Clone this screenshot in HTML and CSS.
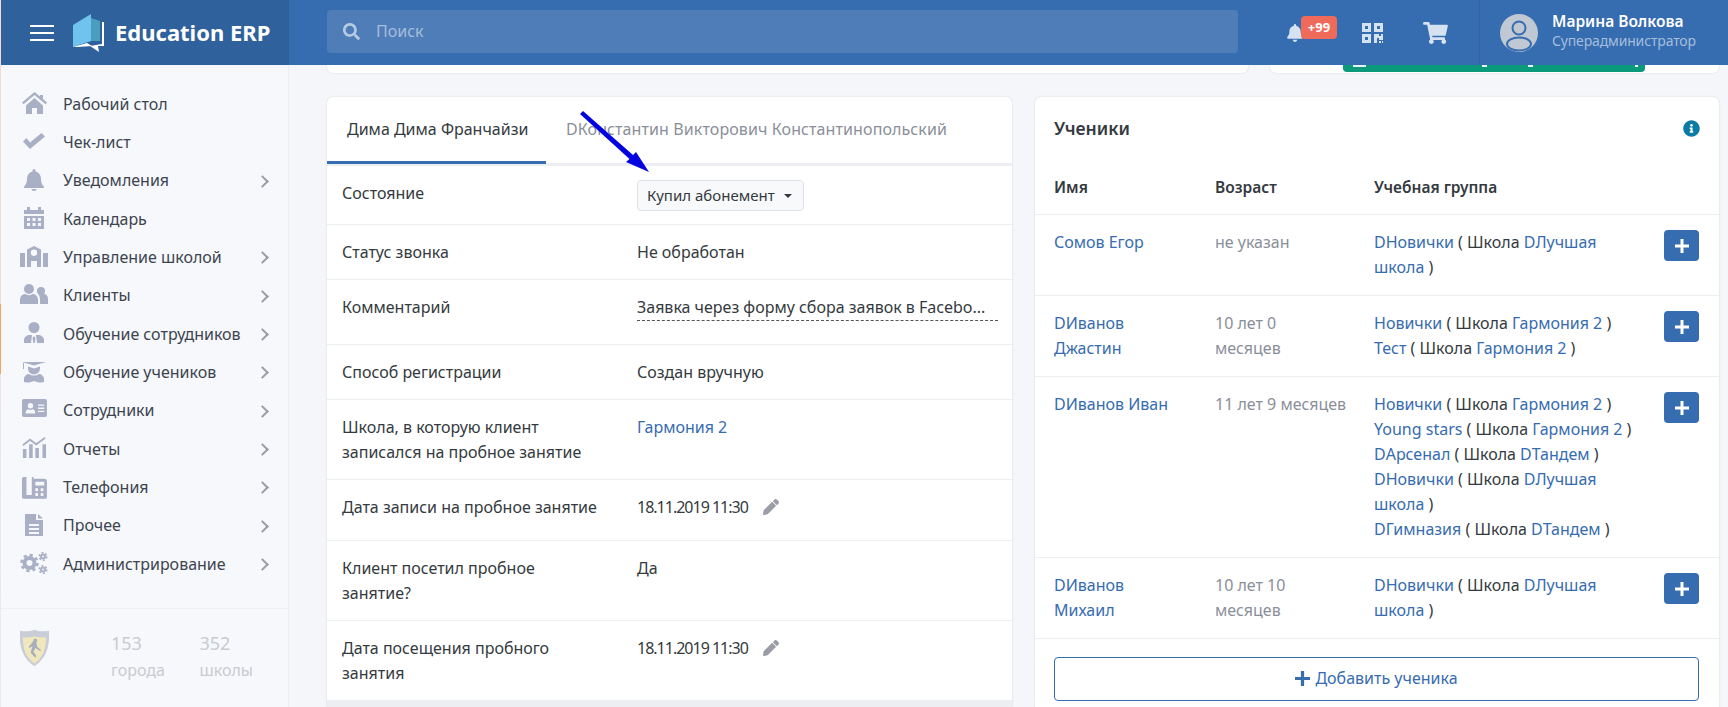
FILE: index.html

```html
<!DOCTYPE html>
<html lang="ru">
<head>
  <meta charset="UTF-8" />
  <meta name="viewport" content="width=device-width, initial-scale=1.0"/>
  <title>Education ERP</title>
  <link rel="stylesheet" href="styles.css">
</head>
<body>
  <header class="topbar">
    <div class="brand">
      <span class="burger"><i></i><i></i><i></i></span>
      <svg class="logo" viewBox="0 0 31 38"><path fill="#6fc3ee" d="M0 11 18 0v27L0 33z"/><path fill="#4a9dbd" d="M18 4l9 3v20H18z"/><path fill="#fff" d="M29 8h2v24h-6l1 6-9-6 12-2z"/><path fill="#fff" d="M0 33l14-4 5 3-14 1z"/></svg>
      <span class="brand-name">Education ERP</span>
    </div>
    <div class="search">
      <svg class="search-icon" viewBox="0 0 512 512"><path d="M505 442.7L405.3 343c-4.5-4.5-10.6-7-17-7H372c27.6-35.3 44-79.7 44-128C416 93.1 322.9 0 208 0S0 93.1 0 208s93.1 208 208 208c48.3 0 92.7-16.4 128-44v16.3c0 6.4 2.5 12.5 7 17l99.7 99.7c9.4 9.4 24.6 9.4 33.9 0l28.3-28.3c9.4-9.4 9.4-24.6.1-34zM208 336c-70.7 0-128-57.2-128-128 0-70.7 57.2-128 128-128 70.7 0 128 57.2 128 128 0 70.7-57.2 128-128 128z"/></svg>
      <span>Поиск</span>
    </div>
    <div class="tools">
      <span class="bell">
        <svg viewBox="0 0 448 512"><path d="M224 512c35.3 0 64-28.7 64-64H160c0 35.3 28.7 64 64 64zm215.4-149.7c-19.3-20.8-55.5-52-55.5-154.3 0-77.7-54.5-139.9-128-155.200V32c0-17.700-14.300-32-32-32s-32 14.300-32 32v20.800C118.400 68.100 64 130.300 64 208c0 102.300-36.200 133.500-55.500 154.300-6 6.400-8.600 14.100-8.500 21.700.1 16.400 13 32 32.100 32h383.800c19.100 0 32-15.600 32.100-32 .1-7.600-2.600-15.300-8.500-21.700z"/></svg>
        <b class="badge">+99</b>
      </span>
      <svg class="qr" viewBox="0 0 21 20"><path fill-rule="evenodd" d="M0 0h9v9H0zM3 3v3h3V3zM12 0h9v9h-9zM15 3v3h3V3zM0 11h9v9H0zM3 14v3h3v-3zM12 11h5v2h2v-2h2v6h-4v-2h-2v5h-3zM17 18h2v2h-2zM20 18h1v2h-1z"/></svg>
      <svg class="cart" viewBox="0 0 576 512"><path d="M528.100 301.300l47.300-208C578.800 78.300 567.400 64 552 64H159.200l-9.200-44.800C147.800 8 137.900 0 126.500 0H24C10.700 0 0 10.700 0 24v16c0 13.300 10.700 24 24 24h69.900l70.200 343.400C147.300 417.100 136 435.200 136 456c0 30.900 25.100 56 56 56s56-25.100 56-56c0-15.700-6.400-29.800-16.800-40h209.600C430.400 426.200 424 440.300 424 456c0 30.900 25.100 56 56 56s56-25.100 56-56c0-22.200-12.900-41.300-31.600-50.400l5.500-24.300c3.400-15-8-29.300-23.400-29.300H218.100l-6.500-32h293.100c11.200 0 20.900-7.800 23.400-18.700z"/></svg>
    </div>
    <div class="user">
      <svg class="avatar" viewBox="0 0 38 38"><circle cx="19" cy="19" r="19" fill="#c0c8d4"/><circle cx="19" cy="14" r="6.500" fill="none" stroke="#366cb0" stroke-width="2"/><ellipse cx="19" cy="30" rx="12" ry="6.500" fill="none" stroke="#366cb0" stroke-width="2"/></svg>
      <div class="user-info">
        <div class="user-name">Марина Волкова</div>
        <div class="user-role">Суперадминистратор</div>
      </div>
    </div>
  </header>

  <div class="layout">
    <aside class="sidebar">
      <nav class="menu">
        <a class="menu-item"><svg viewBox="0 0 28 24"><path d="M14.500 0 2 10.500l1.500 1.700L14.500 3l11 9.200L27 10.500l-4-3.500V3h-3v1.400zM6 13.500V22h6v-6h5v6h6v-8.500L14.500 6z"/></svg><span>Рабочий стол</span></a>
        <a class="menu-item"><svg viewBox="0 0 28 24"><path d="M6.500 7 3 10.500 10 18 25 5.500 21.500 2 10 11.500z"/></svg><span>Чек-лист</span></a>
        <a class="menu-item more"><svg viewBox="0 0 28 24"><path d="M14 0c-1 0-1.500.7-1.500 2v.5C9 3.500 7 6 7 10c0 5-2 6-3 8v1h20v-1c-1-2-3-3-3-8 0-4-2-6.500-5.500-7.500V2c0-1.300-.5-2-1.500-2zM11.500 20h5c0 1-1 2-2.500 2s-2.500-1-2.500-2z"/></svg><span>Уведомления</span></a>
        <a class="menu-item"><svg viewBox="0 0 28 24"><path fill-rule="evenodd" d="M7 0h3v3h8V0h3v3h3v19H4V3h3zM4 7v2h20V7zM7 11v3h3v-3zM12.500 11v3h3v-3zM18 11v3h3v-3zM7 16v3h3v-3zM12.500 16v3h3v-3zM18 16v3h3v-3z"/></svg><span>Календарь</span></a>
        <a class="menu-item more"><svg viewBox="0 0 28 24"><path fill-rule="evenodd" d="M14 0l7 3.500V21h-4v-6h-6v6H7V3.500zM14 3.500a3.200 3.200 0 1 0 0 6.400 3.200 3.200 0 0 0 0-6.400zM0 7h5v14H0zM23 7h5v14h-5z"/></svg><span>Управление школой</span></a>
        <a class="menu-item more"><svg viewBox="0 0 28 24"><circle cx="9" cy="5" r="5"/><circle cx="21" cy="7" r="4"/><path d="M0 20v-4c0-4 3-6 5-6 2.500 1.500 5.500 1.500 8 0 2 0 5 2 5 6v4zM20 20v-5c0-2-1-4-2-5 2 .8 4 .8 6-.2 2 .2 4 2.200 4 5.200v5z"/></svg><span>Клиенты</span></a>
        <a class="menu-item more"><svg viewBox="0 0 28 24"><circle cx="14" cy="5.500" r="5.500"/><path d="M4 21v-3c0-3 3-5 6-5h2l-1 8zM24 21v-3c0-3-3-5-6-5h-2l1 8zM14 14l1.500 2-.8 5h-1.400l-.8-5z"/></svg><span>Обучение сотрудников</span></a>
        <a class="menu-item more"><svg viewBox="0 0 28 24"><path d="M2 1h24L14 4.500zM8 5.500l6 2 6-2v2a6 6 0 0 1-12 0zM4 21v-3c0-3 3-5 5-5 3 2 7 2 10 0 2 0 5 2 5 5v3c-2 .8-5 .8-10-1-5 1.800-8 1.800-10 1z"/><path d="M3 2h1v6H3z"/></svg><span>Обучение учеников</span></a>
        <a class="menu-item more"><svg viewBox="0 0 28 24"><path transform="translate(2 -1.800) scale(.89 .9)" fill-rule="evenodd" d="M2 2h24a2 2 0 0 1 2 2v16a2 2 0 0 1-2 2H2a2 2 0 0 1-2-2V4a2 2 0 0 1 2-2zM9.500 6.500a3 3 0 1 0 0 6 3 3 0 0 0 0-6zM4 18h11c0-3-2-4.500-3-4.500-1.500.8-3.500.8-5 0-1 0-3 1.500-3 4.500zM18 8v1.500h7V8zM18 11.500V13h7v-1.500zM18 15v1.500h7V15z"/></svg><span>Сотрудники</span></a>
        <a class="menu-item more"><svg viewBox="0 0 28 24"><g transform="translate(2 -1) scale(.89 .92)"><path d="M1 14h4v10H1zM8 9h4v15H8zM15 13h4v11h-4zM23 9h4v15h-4z"/><path fill="none" stroke="currentColor" stroke-width="2" d="M1 10l8-6 7 5 10-7"/></g></svg><span>Отчеты</span></a>
        <a class="menu-item more"><svg viewBox="0 0 28 24"><path transform="translate(2 0) scale(.89 .95)" fill-rule="evenodd" d="M2 1h3v19h6V1h2v2h12a3 3 0 0 1 3 3v16a2 2 0 0 1-2 2H2a2 2 0 0 1-2-2V3a2 2 0 0 1 2-2zM15 6v4h10V6zM15 13v3h3v-3zM21 13v3h3v-3zM15 18v3h3v-3zM21 18v3h3v-3z"/></svg><span>Телефония</span></a>
        <a class="menu-item more"><svg viewBox="0 0 28 24"><path fill-rule="evenodd" d="M5 0h11v6h7v16H5zM18 0l5 4.500h-5zM9 10v2h10v-2zM9 14v2h10v-2zM9 18v2h10v-2z"/></svg><span>Прочее</span></a>
        <a class="menu-item more"><svg viewBox="0 0 28 24"><circle cx="9.500" cy="11" r="5" fill="none" stroke="currentColor" stroke-width="4"/><circle cx="9.500" cy="11" r="8" fill="none" stroke="currentColor" stroke-width="2.500" stroke-dasharray="3.100 3.180"/><circle cx="23" cy="4.500" r="2" fill="none" stroke="currentColor" stroke-width="2"/><circle cx="23" cy="4.500" r="3.800" fill="none" stroke="currentColor" stroke-width="1.500" stroke-dasharray="2 1.980"/><circle cx="23" cy="17.500" r="2" fill="none" stroke="currentColor" stroke-width="2"/><circle cx="23" cy="17.500" r="3.800" fill="none" stroke="currentColor" stroke-width="1.500" stroke-dasharray="2 1.980"/></svg><span>Администрирование</span></a>
      </nav>
      <div class="side-foot">
        <svg class="shield" viewBox="0 0 30 38"><path fill="#b9bfcc" d="M15 0c5 2 10 2 15 1 1 16-2 28-15 37C2 29-1 17 0 1c5 1 10 1 15-1z"/><path fill="#efe3a8" d="M15 7c4 1 8 1 12 1 0 12-3 21-12 27C6 29 3 20 3 8c4 0 8 0 12-1z"/><path fill="#8d96aa" d="M14 11a2 2 0 1 1 3 2l1 5 4 3-1 1-5-3-2 4 3 4-1 2-5-5 2-7-3 2-1-1 4-5z"/></svg>
        <div class="stat stat-first"><div class="stat-num">153</div><div class="stat-label">города</div></div>
        <div class="stat"><div class="stat-num">352</div><div class="stat-label">школы</div></div>
      </div>
    </aside>

    <main class="content">
      <div class="top-strip">
        <div class="card strip-left"></div>
        <div class="card strip-right"><span class="green-btn"></span></div>
      </div>

      <div class="columns">
        <section class="card client-card">
          <div class="tabs">
            <span class="tab active">Дима Дима Франчайзи</span>
            <span class="tab second">DКонстантин Викторович Константинопольский</span>
          </div>
          <div class="row state-row">
            <div class="row-label">Состояние</div>
            <div class="row-value"><span class="state-btn">Купил абонемент<i class="caret"></i></span></div>
          </div>
          <div class="row">
            <div class="row-label">Статус звонка</div>
            <div class="row-value">Не обработан</div>
          </div>
          <div class="row">
            <div class="row-label">Комментарий</div>
            <div class="row-value"><div class="comment">Заявка через форму сбора заявок в Facebo...</div></div>
          </div>
          <div class="row">
            <div class="row-label">Способ регистрации</div>
            <div class="row-value">Создан вручную</div>
          </div>
          <div class="row">
            <div class="row-label">Школа, в которую клиент записался на пробное занятие</div>
            <div class="row-value"><a class="link">Гармония 2</a></div>
          </div>
          <div class="row date-row">
            <div class="row-label">Дата записи на пробное занятие</div>
            <div class="row-value"><span class="date">18.11.2019 11:30</span><svg class="pencil" viewBox="0 0 512 512"><path d="M497.900 142.100l-46.100 46.100c-4.700 4.700-12.300 4.700-17 0l-111-111c-4.700-4.700-4.700-12.300 0-17l46.100-46.100c18.700-18.700 49.100-18.700 67.900 0l60.100 60.100c18.800 18.700 18.800 49.100 0 67.900zM284.200 99.800L21.600 362.400.4 483.900c-2.900 16.400 11.400 30.600 27.800 27.800l121.500-21.300 262.600-262.600c4.700-4.700 4.700-12.300 0-17l-111-111c-4.800-4.700-12.400-4.700-17.100 0z"/></svg></div>
          </div>
          <div class="row">
            <div class="row-label">Клиент посетил пробное занятие?</div>
            <div class="row-value">Да</div>
          </div>
          <div class="row date-last">
            <div class="row-label">Дата посещения пробного занятия</div>
            <div class="row-value"><span class="date">18.11.2019 11:30</span><svg class="pencil" viewBox="0 0 512 512"><path d="M497.900 142.100l-46.100 46.100c-4.700 4.700-12.300 4.700-17 0l-111-111c-4.700-4.700-4.700-12.300 0-17l46.100-46.100c18.700-18.700 49.100-18.700 67.900 0l60.100 60.100c18.800 18.700 18.800 49.100 0 67.900zM284.200 99.800L21.600 362.400.4 483.900c-2.900 16.400 11.400 30.600 27.800 27.800l121.500-21.300 262.600-262.600c4.700-4.700 4.700-12.300 0-17l-111-111c-4.800-4.700-12.400-4.700-17.100 0z"/></svg></div>
          </div>
        </section>

        <section class="card students-card">
          <div class="students-title">
            <h3>Ученики</h3>
            <svg class="info" viewBox="0 0 512 512"><path d="M256 8C119 8 8 119 8 256s111 248 248 248 248-111 248-248S393 8 256 8zm0 110c23.200 0 42 18.800 42 42s-18.800 42-42 42-42-18.800-42-42 18.800-42 42-42zm56 254c0 6.600-5.400 12-12 12h-88c-6.600 0-12-5.400-12-12v-24c0-6.600 5.400-12 12-12h12v-64h-12c-6.600 0-12-5.400-12-12v-24c0-6.600 5.400-12 12-12h64c6.600 0 12 5.400 12 12v100h12c6.600 0 12 5.400 12 12z"/></svg>
          </div>
          <div class="st-row st-head">
            <div>Имя</div><div>Возраст</div><div>Учебная группа</div>
          </div>
          <div class="st-row">
            <div><a class="link">Сомов Егор</a></div>
            <div class="age">не указан</div>
            <div><a class="link">DНовички</a> ( Школа <a class="link">DЛучшая</a><br><a class="link">школа</a> )</div>
            <button class="plus-btn"><svg viewBox="0 0 14 14"><path d="M5.500 0h3v5.500H14v3H8.500V14h-3V8.500H0v-3h5.500z"/></svg></button>
          </div>
          <div class="st-row">
            <div><a class="link">DИванов</a><br><a class="link">Джастин</a></div>
            <div class="age">10 лет 0<br>месяцев</div>
            <div><a class="link">Новички</a> ( Школа <a class="link">Гармония 2</a> )<br><a class="link">Тест</a> ( Школа <a class="link">Гармония 2</a> )</div>
            <button class="plus-btn"><svg viewBox="0 0 14 14"><path d="M5.500 0h3v5.500H14v3H8.500V14h-3V8.500H0v-3h5.500z"/></svg></button>
          </div>
          <div class="st-row">
            <div><a class="link">DИванов Иван</a></div>
            <div class="age">11 лет 9 месяцев</div>
            <div><a class="link">Новички</a> ( Школа <a class="link">Гармония 2</a> )<br><a class="link">Young stars</a> ( Школа <a class="link">Гармония 2</a> )<br><a class="link">DАрсенал</a> ( Школа <a class="link">DТандем</a> )<br><a class="link">DНовички</a> ( Школа <a class="link">DЛучшая</a><br><a class="link">школа</a> )<br><a class="link">DГимназия</a> ( Школа <a class="link">DТандем</a> )</div>
            <button class="plus-btn"><svg viewBox="0 0 14 14"><path d="M5.500 0h3v5.500H14v3H8.500V14h-3V8.500H0v-3h5.500z"/></svg></button>
          </div>
          <div class="st-row">
            <div><a class="link">DИванов</a><br><a class="link">Михаил</a></div>
            <div class="age">10 лет 10<br>месяцев</div>
            <div><a class="link">DНовички</a> ( Школа <a class="link">DЛучшая</a><br><a class="link">школа</a> )</div>
            <button class="plus-btn"><svg viewBox="0 0 14 14"><path d="M5.500 0h3v5.500H14v3H8.500V14h-3V8.500H0v-3h5.500z"/></svg></button>
          </div>
          <div class="add-wrap">
            <button class="add-btn"><svg viewBox="0 0 14 14"><path d="M5.500 0h3v5.500H14v3H8.500V14h-3V8.500H0v-3h5.500z"/></svg>Добавить ученика</button>
          </div>
        </section>
      </div>
    </main>
  </div>

  <svg class="arrow" viewBox="0 0 70 63"><path fill="#0303e0" d="M3 1 53 45 56 42 69 62 46 52 49.500 49 0 4z"/></svg>
</body>
</html>
```

FILE: styles.css

```css
* {
  box-sizing: border-box;
}
html, body {
  margin: 0;
  height: 100%;
}
body {
  position: relative;
  height: 707px;
  overflow: hidden;
  background: #f5f6f9;
  font-family: "Noto Sans", Arial, sans-serif;
  font-size: 16px;
  line-height: 25px;
  color: #343a40;
}
/* thin strip along the left edge of the window */
body::before {
  content: "";
  position: absolute;
  z-index: 3;
  left: 0;
  top: 0;
  bottom: 0;
  width: 1px;
  background: linear-gradient(to bottom, #f3dccf 0, #f3dccf 304px, #f7a35c 304px, #f7a35c 374px, #eee3e8 374px, #e8ebf1 100%);
}
a {
  text-decoration: none;
}
.link {
  color: #366cb0;
}

/* top bar */
.topbar {
  position: relative;
  z-index: 2;
  display: flex;
  height: 65px;
  background: #366cb0;
}
.brand {
  display: flex;
  align-items: center;
  width: 289px;
  padding-left: 30px;
  background: #2f619c;
}
.burger {
  display: flex;
  flex-direction: column;
  gap: 5px;
  width: 24px;
}
.burger i {
  height: 2px;
  background: #fff;
}
.logo {
  width: 31px;
  height: 38px;
  margin-left: 19px;
}
.brand-name {
  margin-left: 11px;
  font-size: 22px;
  font-weight: 700;
  color: #fff;
}
.search {
  display: flex;
  align-items: center;
  width: 911px;
  height: 43px;
  margin: 10px 0 0 38px;
  padding-left: 16px;
  border-radius: 4px;
  background: #4f7db8;
  color: #a5bddc;
}
.search-icon {
  width: 17px;
  height: 17px;
  margin-right: 16px;
  fill: #b6cae3;
}
.tools {
  display: flex;
  align-items: center;
  width: 241px;
  padding-left: 49px;
  fill: #d5e2f2;
}
.bell {
  position: relative;
  width: 75px;
  height: 18px;
}
.bell svg {
  display: block;
  width: 16px;
  height: 18px;
}
.badge {
  position: absolute;
  left: 14px;
  top: -8px;
  width: 36px;
  height: 23px;
  border-radius: 4px;
  background: #ef6a5a;
  font-size: 13px;
  line-height: 22px;
  text-align: center;
  color: #fff;
}
.qr {
  width: 21px;
  height: 20px;
}
.cart {
  width: 25px;
  height: 22px;
  margin-left: 40px;
}
.user {
  display: flex;
  align-items: center;
  flex: 1;
  padding-left: 20px;
  border-left: 1px solid #3263a3;
}
.avatar {
  width: 38px;
  height: 38px;
}
.user-info {
  margin-left: 14px;
  padding-bottom: 3px;
}
.user-name {
  font-size: 15.5px;
  font-weight: 600;
  line-height: 20px;
  color: #fff;
}
.user-role {
  font-size: 14px;
  letter-spacing: -0.15px;
  line-height: 20px;
  color: #a5bedd;
}

/* sidebar */
.layout {
  display: flex;
  height: 642px;
}
.sidebar {
  width: 289px;
  padding-top: 20px;
  border-right: 1px solid #eceef2;
  background: #f6f8fb;
}
.menu {
  height: 523px;
}
.menu-item {
  position: relative;
  display: flex;
  align-items: center;
  height: 38.35px;
  padding-left: 20px;
  color: #3d4450;
}
.menu-item svg {
  width: 28px;
  height: 24px;
  margin-right: 15px;
  fill: #a9afc4;
  color: #a9afc4;
}
.more::after {
  content: "";
  position: absolute;
  left: 258px;
  top: 15px;
  width: 7px;
  height: 7px;
  border-top: 2px solid #9a9da6;
  border-right: 2px solid #9a9da6;
  transform: rotate(45deg);
}
.side-foot {
  display: flex;
  padding: 20px 0 0 20px;
  border-top: 1px solid #eef0f4;
}
.shield {
  width: 30px;
  height: 38px;
  opacity: 0.75;
}
.stat {
  width: 92px;
  color: #c9cbd0;
}
.stat-first {
  margin-left: 62px;
}
.stat-num {
  font-size: 18px;
  line-height: 29px;
}
.stat-label {
  line-height: 25px;
}

/* content */
.content {
  flex: 1;
  padding: 0 9px 0 38px;
}
.card {
  background: #fff;
  border-radius: 6px;
  box-shadow: 0 0 2px rgba(0,0,0,0.15);
}
.top-strip {
  display: flex;
  gap: 22px;
  height: 8px;
}
.strip-left {
  width: 921px;
  border-radius: 0 0 6px 6px;
}
.strip-right {
  flex: 1;
  padding-left: 73px;
  border-radius: 0 0 6px 6px;
}
.green-btn {
  display: block;
  width: 302px;
  height: 7px;
  border-radius: 0 0 4px 4px;
  background-color: #0a9a7b;
  background-repeat: no-repeat;
  background-image: linear-gradient(#e8f5f1, #e8f5f1), linear-gradient(#e8f5f1, #e8f5f1), linear-gradient(#e8f5f1, #e8f5f1), linear-gradient(#e8f5f1, #e8f5f1);
  background-size: 13px 2px, 5px 2px, 5px 2px, 3px 2px;
  background-position: 10px 0, 139px 0, 185px 0, 292px 0;
}
.columns {
  display: grid;
  grid-template-columns: 685px 684px;
  gap: 23px;
  margin-top: 24px;
}
.client-card, .students-card {
  height: 640px;
}

/* tabs and rows */
.tabs {
  display: flex;
  height: 69px;
  border-bottom: 3px solid #eceef2;
}
.tab {
  height: 67px;
  padding: 20px 20px 0;
  white-space: nowrap;
  color: #8a8f99;
}
.tab.second {
  letter-spacing: 0.1px;
}
.tab.active {
  width: 219px;
  border-bottom: 3px solid #366cb0;
  color: #343a40;
}
.row {
  display: flex;
  padding: 15px 14px 14px 15px;
  border-bottom: 1px solid #eceef2;
}
.row-label {
  width: 295px;
  padding-right: 30px;
}
.row-value {
  flex: 1;
  min-width: 0;
}
.state-row {
  padding-bottom: 13px;
}
.state-btn {
  display: inline-flex;
  align-items: center;
  height: 31px;
  margin-top: -1px;
  padding: 0 11px 0 9px;
  border: 1px solid #dfe2e8;
  border-radius: 4px;
  background: #f8f9fb;
  font-size: 15px;
}
.caret {
  margin-left: 9px;
  border-top: 4px solid #343a40;
  border-left: 4px solid transparent;
  border-right: 4px solid transparent;
}
.comment {
  margin-bottom: 9px;
  border-bottom: 1px dashed #555;
  white-space: nowrap;
  overflow: hidden;
}
.date {
  letter-spacing: -1px;
}
.date-row .row-value {
  height: 31px;
}
.date-last {
  border-bottom: 7px solid #eceef2;
}
.pencil {
  width: 16px;
  height: 16px;
  margin-left: 15px;
  vertical-align: -2px;
  fill: #9a9ca6;
}

/* students */
.students-title {
  display: flex;
  justify-content: space-between;
  align-items: center;
  height: 62px;
  padding: 0 19px;
}
.students-title h3 {
  margin: 0;
  font-size: 17.5px;
  font-weight: 600;
}
.info {
  width: 17px;
  height: 17px;
  fill: #0a7aa6;
}
.st-row {
  position: relative;
  display: grid;
  grid-template-columns: 161px 159px 270px;
  padding: 15px 19px;
  border-bottom: 1px solid #eceef2;
}
.st-head {
  height: 56px;
  padding-top: 16px;
  font-size: 15.5px;
  font-weight: 600;
}
.age {
  color: #8a8f99;
}
.plus-btn {
  position: absolute;
  right: 20px;
  top: 15px;
  display: flex;
  align-items: center;
  justify-content: center;
  width: 35px;
  height: 31px;
  padding: 0;
  border: 0;
  border-radius: 4px;
  background: #366cb0;
}
.plus-btn svg {
  width: 14px;
  height: 14px;
  fill: #fff;
}
.add-wrap {
  padding: 18px 20px 0 19px;
}
.add-btn {
  display: flex;
  align-items: center;
  justify-content: center;
  width: 100%;
  height: 44px;
  padding-bottom: 3px;
  border: 1px solid #366cb0;
  border-radius: 4px;
  background: #fff;
  font-family: inherit;
  font-size: 16px;
  color: #366cb0;
}
.add-btn svg {
  width: 15px;
  height: 15px;
  margin-right: 5px;
  fill: #366cb0;
}
.arrow {
  position: absolute;
  left: 580px;
  top: 110px;
  width: 70px;
  height: 63px;
}
```
